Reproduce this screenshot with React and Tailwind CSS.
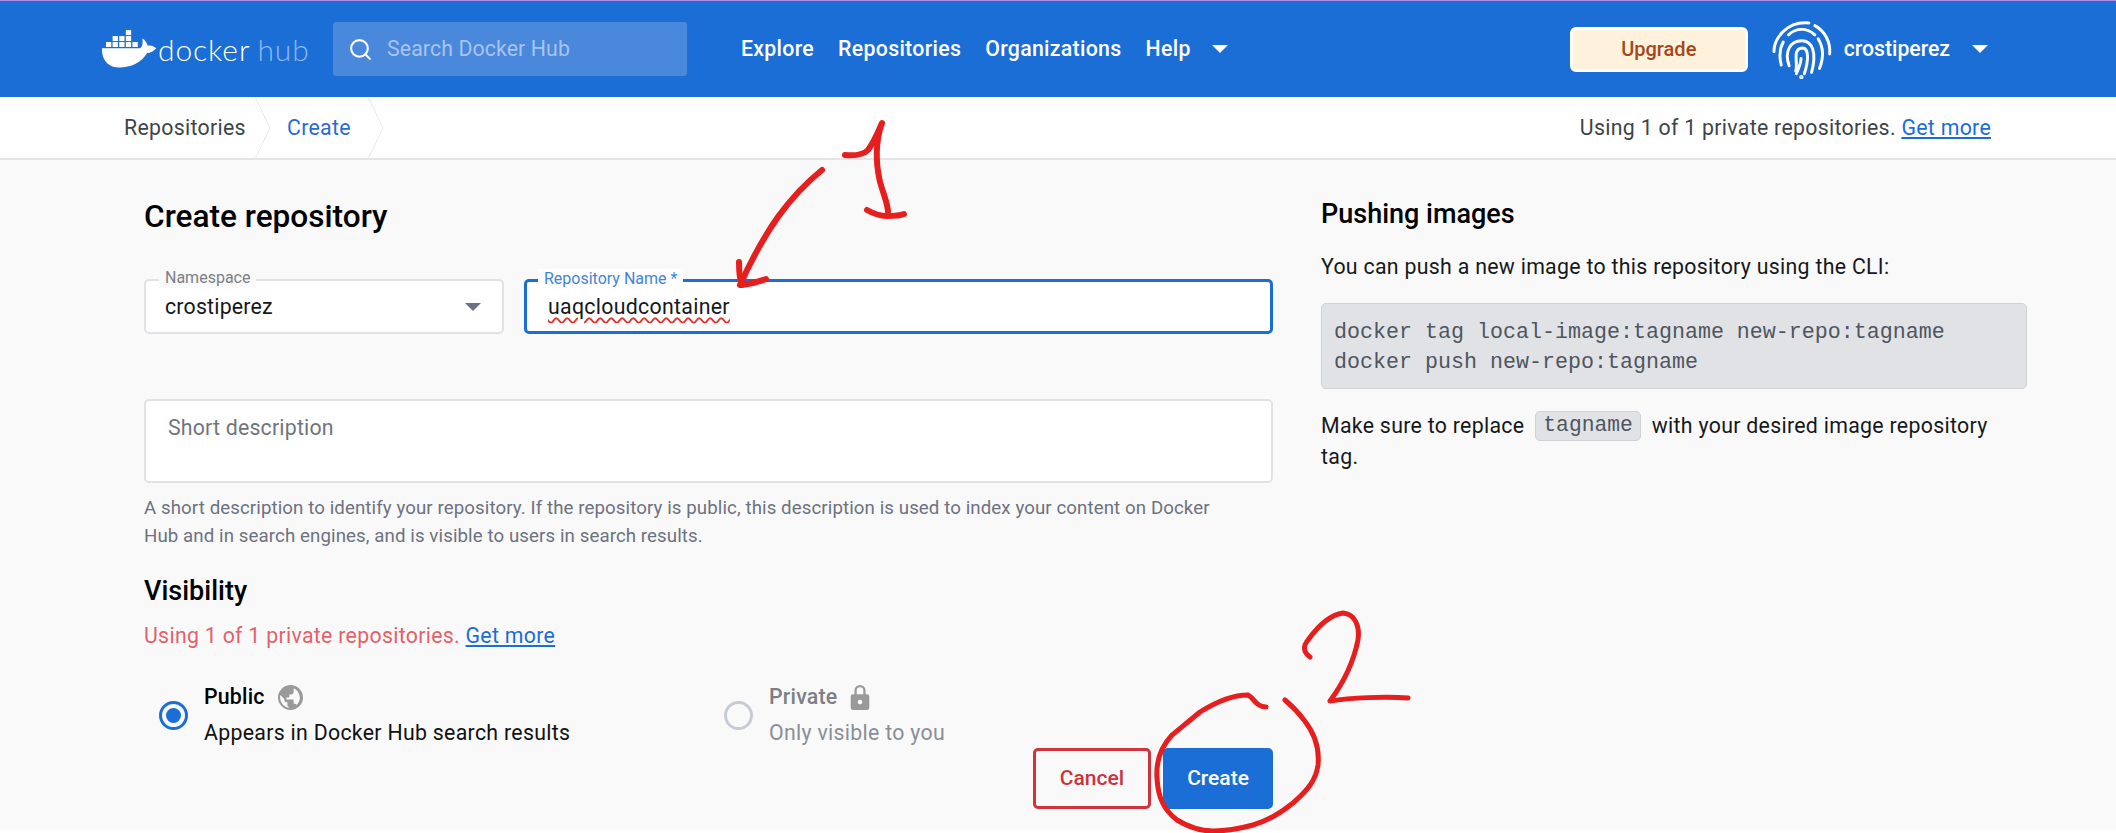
import React from "react";
import { Search } from "lucide-react";

const roboto = "font-['Roboto',sans-serif]";

function Whale() {
  return (
    <svg viewBox="36 42 166 120" className="w-[55px] h-[40px] shrink-0" fill="white">
      <rect x="108" y="45" width="16" height="15" />
      <rect x="68" y="63" width="16" height="15" />
      <rect x="88" y="63" width="16" height="15" />
      <rect x="108" y="63" width="16" height="15" />
      <rect x="48" y="81" width="16" height="15" />
      <rect x="68" y="81" width="16" height="15" />
      <rect x="88" y="81" width="16" height="15" />
      <rect x="108" y="81" width="16" height="15" />
      <rect x="128" y="81" width="16" height="15" />
      <path d="M36 100 H148 C156 100 160 88 158 70 C166 74 172 84 174 92 C184 90 192 94 200 100 C192 110 182 114 172 114 C156 142 124 158 88 158 C56 158 34 134 36 100 Z" />
    </svg>
  );
}

function Fingerprint() {
  return (
    <svg viewBox="36 26 182 182" className="w-[60px] h-[60px]" fill="none" stroke="white" strokeWidth="9" strokeLinecap="round">
      <path d="M42 125 C42 85 80 32 148 38" />
      <path d="M166 46 C196 62 214 96 211 132" />
      <path d="M86 74 C110 52 142 52 166 74" />
      <path d="M70 96 C58 118 58 142 64 166" />
      <path d="M176 86 C192 112 192 146 180 176" />
      <path d="M88 168 C72 124 92 92 126 92 C160 92 172 130 156 188" />
      <path d="M108 184 C116 160 96 116 128 114 C150 114 146 156 134 192" />
      <path d="M124 146 C124 160 118 174 110 192" />
      <circle cx="125" cy="202" r="2" fill="white" />
    </svg>
  );
}

function Crumb({ children, className, arrowLeft }) {
  return (
    <div className={`relative flex items-center h-full ${className}`}>
      {children}
      <svg viewBox="0 0 16 62" className={`absolute top-0 h-[62px] w-[16px] ${arrowLeft}`} fill="none" stroke="#e8e8ea" strokeWidth="1">
        <path d="M0 0 L15 31 L0 62" />
      </svg>
    </div>
  );
}

function Header() {
  return (
    <header className="h-[97px] bg-[#1b6ed5] border-t border-t-[#b08be6] flex items-center shrink-0 text-white">
      <div className="flex items-center w-[233px] pl-[102px] gap-[1px]">
        <Whale />
        <span className="font-['Lato',sans-serif] font-light text-[30px] leading-none tracking-[0.9px] -mt-[1px] whitespace-nowrap">
          docker<span className="ml-[7px] text-[#8fb8ec]">hub</span>
        </span>
      </div>
      <div className="ml-[100px] w-[354px] h-[54px] bg-[#4a88dc] rounded-[3px] flex items-center pl-[15px] gap-[14px]">
        <Search size={25} strokeWidth={2} className="text-white" />
        <span className="text-[21.3px] tracking-[0.1px] text-[#a6c4ef]">Search Docker Hub</span>
      </div>
      <nav className="flex items-center ml-[54px] gap-[24px] text-[21.3px] tracking-[0.3px] font-medium">
        <span>Explore</span>
        <span>Repositories</span>
        <span>Organizations</span>
        <span>Help</span>
        <span className="-ml-[3px] w-0 h-0 border-x-[8px] border-x-transparent border-t-[8px] border-t-white" />
      </nav>
      <div className="ml-auto flex items-center mr-[128px]">
        <div className="w-[178px] h-[45px] bg-[#fff2dc] border-[3px] border-white rounded-[6px] flex items-center justify-center text-[#a3461c] text-[20px] font-medium">
          Upgrade
        </div>
        <div className="ml-[24px]"><Fingerprint /></div>
        <span className="ml-[12px] text-[21.2px] font-medium">crostiperez</span>
        <span className="ml-[22px] w-0 h-0 border-x-[8px] border-x-transparent border-t-[8px] border-t-white" />
      </div>
    </header>
  );
}

function SubBar() {
  return (
    <div className="h-[63px] bg-white border-b-2 border-b-[#e5e5e7] flex items-center shrink-0 text-[21.3px] tracking-[0.3px] text-[#3d4449]">
      <Crumb className="ml-[124px] w-[131px]" arrowLeft="left-[131px]">Repositories</Crumb>
      <Crumb className="ml-[32px] w-[81px] text-[#2b6bd1]" arrowLeft="left-[81px]">Create</Crumb>
      <div className="ml-auto mr-[125px]">
        Using 1 of 1 private repositories.{" "}
        <span className="text-[#1b6ed5] underline">Get more</span>
      </div>
    </div>
  );
}

function Field({ label, labelClass, boxClass, children }) {
  return (
    <div className={`relative h-[55px] rounded-[5px] bg-white flex items-center ${boxClass}`}>
      <span className={`absolute -top-[13px] px-[6px] text-[16px] leading-[20px] whitespace-nowrap ${labelClass}`}>
        {label}
      </span>
      {children}
    </div>
  );
}

function RadioOption({ checked, title, sub, icon, className }) {
  return (
    <div className={`flex items-center ${className}`}>
      <span className={`w-[29px] h-[29px] rounded-full border-[3px] flex items-center justify-center shrink-0 ${checked ? "border-[#1b6ed5]" : "border-[#c7cbd4]"}`}>
        {checked && <span className="w-[15px] h-[15px] rounded-full bg-[#1b6ed5]" />}
      </span>
      <div className="ml-[16px]">
        <div className={`flex items-center gap-[13px] h-[30px] text-[21.3px] tracking-[0.2px] font-medium ${checked ? "text-black" : "text-[#7b8087]"}`}>
          {title}
          {icon}
        </div>
        <div className={`mt-[6px] text-[21.3px] tracking-[0.3px] leading-[30px] ${checked ? "text-[#111]" : "text-[#8a8f96]"}`}>{sub}</div>
      </div>
    </div>
  );
}

function GlobeIcon() {
  return (
    <svg viewBox="0 0 24 24" className="w-[25px] h-[25px]" fill="#9a9a9a">
      <path d="M12 0a12 12 0 1 0 0 24 12 12 0 0 0 0-24Zm-1 21.9A10 10 0 0 1 2.3 9.6L6 13.5v1c0 1.1.9 2 2 2h1v3.5l2 1.9Zm6.9-2.6a2 2 0 0 0-1.9-1.4h-1v-3c0-.6-.4-1-1-1H8v-2h2c.6 0 1-.4 1-1V9h2a2 2 0 0 0 2-2V3a10 10 0 0 1 2.900 16.300Z" />
    </svg>
  );
}

function LockIcon() {
  return (
    <svg viewBox="0 0 20 28" className="w-[20px] h-[26px]" fill="#9a9a9a">
      <path d="M4 11V7a6 6 0 0 1 12 0v4h1.500A2.500 2.500 0 0 1 20 13.500v12a2.500 2.500 0 0 1-2.500 2.500h-15A2.500 2.500 0 0 1 0 25.500v-12A2.500 2.500 0 0 1 2.500 11H4Zm2.500 0h7V7a3.500 3.500 0 0 0-7 0v4ZM10 17a2.500 2.500 0 1 0 0 5 2.500 2.500 0 0 0 0-5Z" fillRule="evenodd" />
    </svg>
  );
}

function LeftColumn() {
  return (
    <div className="ml-[144px] w-[1129px] shrink-0">
      <h1 className="mt-[36px] text-[31.6px] leading-[42px] font-medium text-black">Create repository</h1>
      <div className="mt-[41px] flex gap-[20px]">
        <Field label="Namespace" labelClass="left-[13px] text-[#7b8087] bg-[#f9f9fa]" boxClass="w-[360px] border-2 border-[#e1e2e6] pl-[19px] pr-[21px]">
          <span className="mt-[1px] text-[21.3px] tracking-[0.2px] text-[#15181b]">crostiperez</span>
          <span className="ml-auto w-0 h-0 border-x-[8px] border-x-transparent border-t-[8px] border-t-[#6c7280]" />
        </Field>
        <Field label="Repository Name *" labelClass="left-[11px] text-[#3f83dd] bg-white" boxClass="flex-1 border-[3px] border-[#1b6ed5] pl-[21px]">
          <span className="text-[21.3px] tracking-[0.3px] text-[#15181b] underline decoration-wavy decoration-[#e0352b] decoration-[1.5px] underline-offset-[3px]">uaqcloudcontainer</span>
        </Field>
      </div>
      <input
        placeholder="Short description"
        className="mt-[65px] block w-full h-[84px] bg-white border-2 border-[#e1e2e6] rounded-[5px] px-[22px] pb-[28px] text-[21.3px] tracking-[0.2px] placeholder:text-[#6f757c]"
      />
      <p className="mt-[11px] w-[1100px] text-[18.67px] tracking-[0.1px] leading-[28px] text-[#6c7280]">
        A short description to identify your repository. If the repository is public, this description is used to index your content on Docker Hub and in search engines, and is visible to users in search results.
      </p>
      <h2 className="mt-[23px] text-[27px] leading-[36px] font-medium text-black">Visibility</h2>
      <p className="mt-[13px] text-[21.3px] tracking-[0.3px] leading-[28px] text-[#e2626a]">
        Using 1 of 1 private repositories.{" "}
        <span className="text-[#1b6ed5] underline">Get more</span>
      </p>
      <div className="mt-[32px] flex">
        <RadioOption
          checked
          className="ml-[15px] w-[565px]"
          title="Public"
          sub="Appears in Docker Hub search results"
          icon={<GlobeIcon />}
        />
        <RadioOption
          className="w-[260px]"
          title="Private"
          sub="Only visible to you"
          icon={<LockIcon />}
        />
      </div>
      <div className="flex justify-end gap-[12px]">
        <button className="w-[118px] h-[61px] border-[3px] border-[#d0333c] rounded-[5px] text-[#c9353e] text-[21px] font-medium">Cancel</button>
        <button className="w-[110px] h-[61px] bg-[#1b6ed5] rounded-[5px] text-white text-[21px] font-medium">Create</button>
      </div>
    </div>
  );
}

function RightColumn() {
  return (
    <div className="ml-[48px] w-[706px] shrink-0 text-[21.3px] tracking-[0.3px] text-[#15181b]">
      <h2 className="mt-[36px] text-[27px] tracking-normal leading-[36px] font-medium text-black">Pushing images</h2>
      <p className="mt-[20px] leading-[30px]">You can push a new image to this repository using the CLI:</p>
      <pre className="mt-[21px] h-[86px] bg-[#e1e2e6] border border-[#cfd1d6] rounded-[5px] pl-[12px] pt-[14px] font-['Liberation_Mono',monospace] tracking-normal text-[21.67px] leading-[30px] text-[#4f565e]">
{`docker tag local-image:tagname new-repo:tagname
docker push new-repo:tagname`}
      </pre>
      <div className="mt-[21px] flex items-center h-[31px] whitespace-nowrap">
        <span>Make sure to replace</span>
        <code className="ml-[11px] mr-[11px] px-[7px] h-[30px] flex items-center bg-[#e1e2e6] border border-[#cfd1d6] rounded-[5px] font-['Liberation_Mono',monospace] tracking-normal text-[21.3px] text-[#4f565e]">tagname</code>
        <span>with your desired image repository</span>
      </div>
      <div className="leading-[31px]">tag.</div>
    </div>
  );
}

function Annotations() {
  return (
    <svg viewBox="0 0 2116 833" className="absolute inset-0 w-[2116px] h-[833px] pointer-events-none" fill="none" stroke="#e61e1e" strokeLinecap="round" strokeLinejoin="round">
      <path strokeWidth="6" d="M822 170 C790 196 766 228 740 285" />
      <path strokeWidth="6" d="M739 262 C739 272 740 280 742 285 C750 284 758 282 766 279" />
      <path strokeWidth="6" d="M845 155 C856 156 864 154 868 150 C874 142 878 132 882 123 C876 140 875 160 880 182 C884 196 888 204 888 212" />
      <path strokeWidth="6" d="M867 210 C874 214 880 216 887 216 C893 216 899 216 904 214" />
      <path strokeWidth="5" d="M1310 657 C1303 652 1303 646 1308 640 C1318 626 1330 615 1343 613 C1355 614 1360 626 1358 640 C1354 660 1344 682 1330 701 C1350 698 1385 696 1408 698" />
      <path strokeWidth="5" d="M1266 707 C1256 707 1254 698 1248 695 C1232 695 1216 702 1200 712 C1188 722 1178 730 1172 735 C1160 748 1156 764 1157 778 C1158 798 1164 810 1177 820 C1190 828 1202 831 1213 831 C1228 831 1242 828 1253 825 C1270 820 1282 812 1293 803 C1308 790 1316 780 1318 765 C1320 745 1312 730 1304 720 C1298 712 1292 706 1285 700" />
    </svg>
  );
}

export default function App() {
  return (
    <div className={`relative w-[2116px] h-[833px] overflow-hidden bg-white flex flex-col ${roboto}`}>
      <Header />
      <SubBar />
      <main className="h-[670px] shrink-0 bg-[#f9f9fa] flex">
        <LeftColumn />
        <RightColumn />
      </main>
      <Annotations />
    </div>
  );
}
